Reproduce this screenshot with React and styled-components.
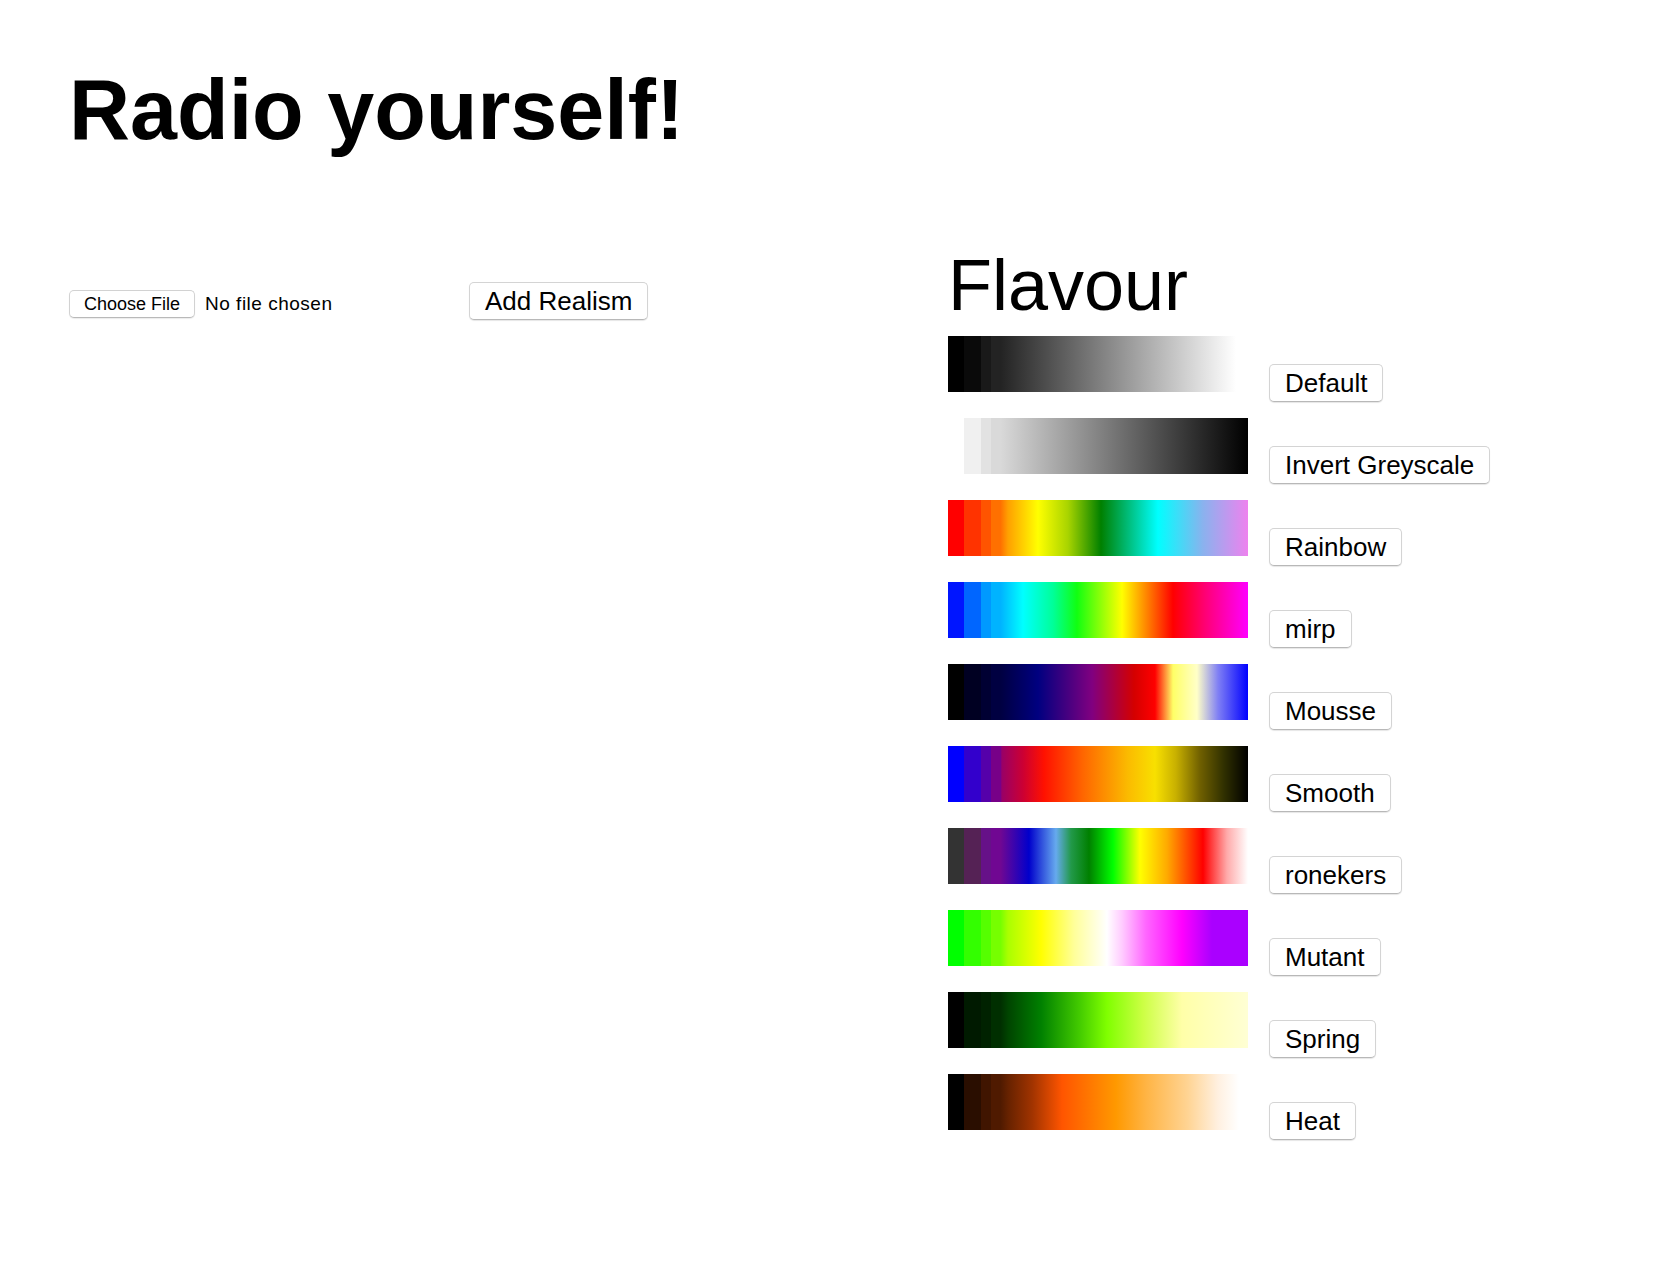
import { useState } from 'react';
import styled, { createGlobalStyle } from 'styled-components';

const GlobalStyle = createGlobalStyle`
  html,
  body {
    margin: 0;
    padding: 0;
    background: #fff;
  }

  body {
    font-family: "Liberation Sans", Arial, Helvetica, sans-serif;
    color: #000;
  }
`;

// first few steps of every map are drawn as flat bands, the rest is smooth
const BANDS = [0, 5.3, 11, 14.5, 17.5];

const toRgb = (hex) => [1, 3, 5].map((i) => parseInt(hex.slice(i, i + 2), 16));

const colourAt = (stops, pos) => {
  if (pos <= stops[0][0]) return stops[0][1];
  for (let i = 1; i < stops.length; i++) {
    const [p1, c1] = stops[i];
    const [p0, c0] = stops[i - 1];
    if (pos <= p1) {
      const t = (pos - p0) / (p1 - p0);
      const a = toRgb(c0);
      const b = toRgb(c1);
      const mix = a.map((v, k) => Math.round(v + (b[k] - v) * t));
      return `rgb(${mix.join(',')})`;
    }
  }
  return stops[stops.length - 1][1];
};

const buildGradient = (stops) => {
  const parts = [];
  for (let i = 0; i < BANDS.length - 1; i++) {
    const c = colourAt(stops, BANDS[i]);
    parts.push(`${c} ${BANDS[i]}%`, `${c} ${BANDS[i + 1]}%`);
  }
  const last = BANDS[BANDS.length - 1];
  stops
    .filter(([p]) => p > last)
    .forEach(([p, c]) => parts.push(`${c} ${p}%`));
  return `linear-gradient(to right, ${parts.join(', ')})`;
};

const FLAVOURS = [
  {
    name: 'Default',
    stops: [[0, '#000000'], [5.3, '#0a0a0a'], [96, '#ffffff'], [100, '#ffffff']],
  },
  {
    name: 'Invert Greyscale',
    stops: [[0, '#ffffff'], [5.3, '#f0f0f0'], [100, '#000000']],
  },
  {
    name: 'Rainbow',
    stops: [
      [0, '#ff0000'], [5.3, '#ff3300'], [12, '#ff5a00'], [20, '#ffa000'],
      [30, '#ffff00'], [40, '#a8d400'], [51, '#008000'], [70, '#00ffff'],
      [85, '#8ab2ee'], [100, '#ee82ee'],
    ],
  },
  {
    name: 'mirp',
    stops: [
      [0, '#0015ff'], [5.3, '#0066ff'], [11, '#0099ff'], [25, '#00ffff'],
      [35, '#00ff99'], [43, '#11ff11'], [58, '#ffff00'], [75, '#ff0000'],
      [86, '#ff0077'], [100, '#ff00ff'],
    ],
  },
  {
    name: 'Mousse',
    stops: [
      [0, '#000000'], [5.3, '#000022'], [11, '#000033'], [30, '#000080'],
      [48, '#800080'], [62, '#d40000'], [69, '#ff0000'], [75, '#ffff66'],
      [83, '#ffffc8'], [90, '#8080f4'], [100, '#0000ff'],
    ],
  },
  {
    name: 'Smooth',
    stops: [
      [0, '#0000ff'], [5.3, '#3300cc'], [11, '#5500aa'], [18, '#990066'],
      [25, '#cc0033'], [32, '#ff1100'], [45, '#ff6600'], [60, '#fbbb00'],
      [69, '#f8e000'], [76, '#c8b000'], [84, '#706000'], [92, '#303000'],
      [100, '#000000'],
    ],
  },
  {
    name: 'ronekers',
    stops: [
      [0, '#333333'], [5.3, '#552255'], [11, '#661188'], [17, '#770099'],
      [27, '#0000cc'], [36, '#66aaee'], [41, '#22994a'], [47, '#008000'],
      [55, '#00ff00'], [64, '#ffff00'], [73, '#ffaa00'], [85, '#ff0000'],
      [93, '#ffaaaa'], [100, '#ffffff'],
    ],
  },
  {
    name: 'Mutant',
    stops: [
      [0, '#00ff00'], [5.3, '#33ff00'], [11, '#55ff00'], [20, '#aaff00'],
      [31, '#ffff00'], [42, '#ffff99'], [53, '#ffffff'], [58, '#ffccff'],
      [66, '#ff66ff'], [78, '#ff00ff'], [88, '#aa00ff'], [100, '#aa00ff'],
    ],
  },
  {
    name: 'Spring',
    stops: [
      [0, '#000000'], [5.3, '#001a00'], [11, '#002200'], [20, '#004400'],
      [31, '#008000'], [44, '#44cc00'], [53, '#80ff00'], [65, '#ccff44'],
      [78, '#ffffa8'], [100, '#ffffd4'],
    ],
  },
  {
    name: 'Heat',
    stops: [
      [0, '#000000'], [5.3, '#2a0e00'], [11, '#401500'], [20, '#662200'],
      [28, '#a03300'], [38, '#ff5500'], [56, '#ff9900'], [66, '#ffb444'],
      [80, '#ffd494'], [90, '#fff0e0'], [97, '#ffffff'], [100, '#ffffff'],
    ],
  },
];

const App = () => {
  const [fileName, setFileName] = useState('');
  const [flavour, setFlavour] = useState('Default');

  const handleFile = (e) => {
    const file = e.target.files && e.target.files[0];
    setFileName(file ? file.name : '');
  };

  return (
    <Page>
      <GlobalStyle />
      <Title>Radio yourself!</Title>

      <Main>
        <Controls>
          <FilePicker>
            <PickButton>
              Choose File
              <HiddenInput type="file" accept="audio/*" onChange={handleFile} />
            </PickButton>
            <FileName>{fileName || 'No file chosen'}</FileName>
          </FilePicker>
          <Button type="button">Add Realism</Button>
        </Controls>

        <FlavourPanel>
          <Heading>Flavour</Heading>
          <FlavourList>
            {FLAVOURS.map((f) => (
              <FlavourRow key={f.name}>
                <Swatch $gradient={buildGradient(f.stops)} />
                <Button
                  type="button"
                  $active={flavour === f.name}
                  onClick={() => setFlavour(f.name)}
                >
                  {f.name}
                </Button>
              </FlavourRow>
            ))}
          </FlavourList>
        </FlavourPanel>
      </Main>
    </Page>
  );
};

const Page = styled.div`
  padding: 62px 0 0 69px;
  min-height: 1280px;
  box-sizing: border-box;
`;

const Title = styled.h1`
  margin: 0 0 87px;
  font-size: 84.5px;
  font-weight: bold;
  line-height: 96px;
`;

const Main = styled.div`
  display: grid;
  grid-template-columns: 879px auto;
  align-items: baseline;
`;

const Controls = styled.div`
  display: flex;
  align-items: baseline;
`;

const FilePicker = styled.div`
  display: flex;
  align-items: baseline;
  gap: 10px;
  width: 400px;
`;

const PickButton = styled.label`
  position: relative;
  display: inline-block;
  box-sizing: border-box;
  height: 28px;
  padding: 0 14px;
  font-size: 18px;
  line-height: 26px;
  background: #fff;
  border: 1px solid #d2d2d2;
  border-bottom-color: #b9b9b9;
  border-radius: 5px;
  box-shadow: 0 1px 1px rgba(0, 0, 0, 0.08);
  cursor: pointer;
`;

const HiddenInput = styled.input`
  position: absolute;
  inset: 0;
  opacity: 0;
  width: 100%;
  cursor: pointer;
`;

const FileName = styled.span`
  font-size: 19px;
  letter-spacing: 0.5px;
`;

const Button = styled.button`
  box-sizing: border-box;
  height: 38px;
  padding: 0 15px;
  font-family: inherit;
  font-size: 26px;
  line-height: 30px;
  color: #000;
  background: #fff;
  border: 1px solid #d4d4d4;
  border-bottom-color: #b8b8b8;
  border-radius: 5px;
  box-shadow: 0 1px 1px rgba(0, 0, 0, 0.1);
  cursor: pointer;
  outline: none;

  &:active {
    background: #f2f2f2;
  }
`;

const FlavourPanel = styled.section``;

const Heading = styled.h2`
  margin: 0 0 11px;
  font-size: 72px;
  font-weight: normal;
  line-height: 80px;
`;

const FlavourList = styled.div`
  display: flex;
  flex-direction: column;
  gap: 16px;
`;

const FlavourRow = styled.div`
  display: flex;
  align-items: baseline;
  gap: 21px;
`;

const Swatch = styled.div`
  width: 300px;
  height: 56px;
  background: ${(props) => props.$gradient};
`;

export default App;
